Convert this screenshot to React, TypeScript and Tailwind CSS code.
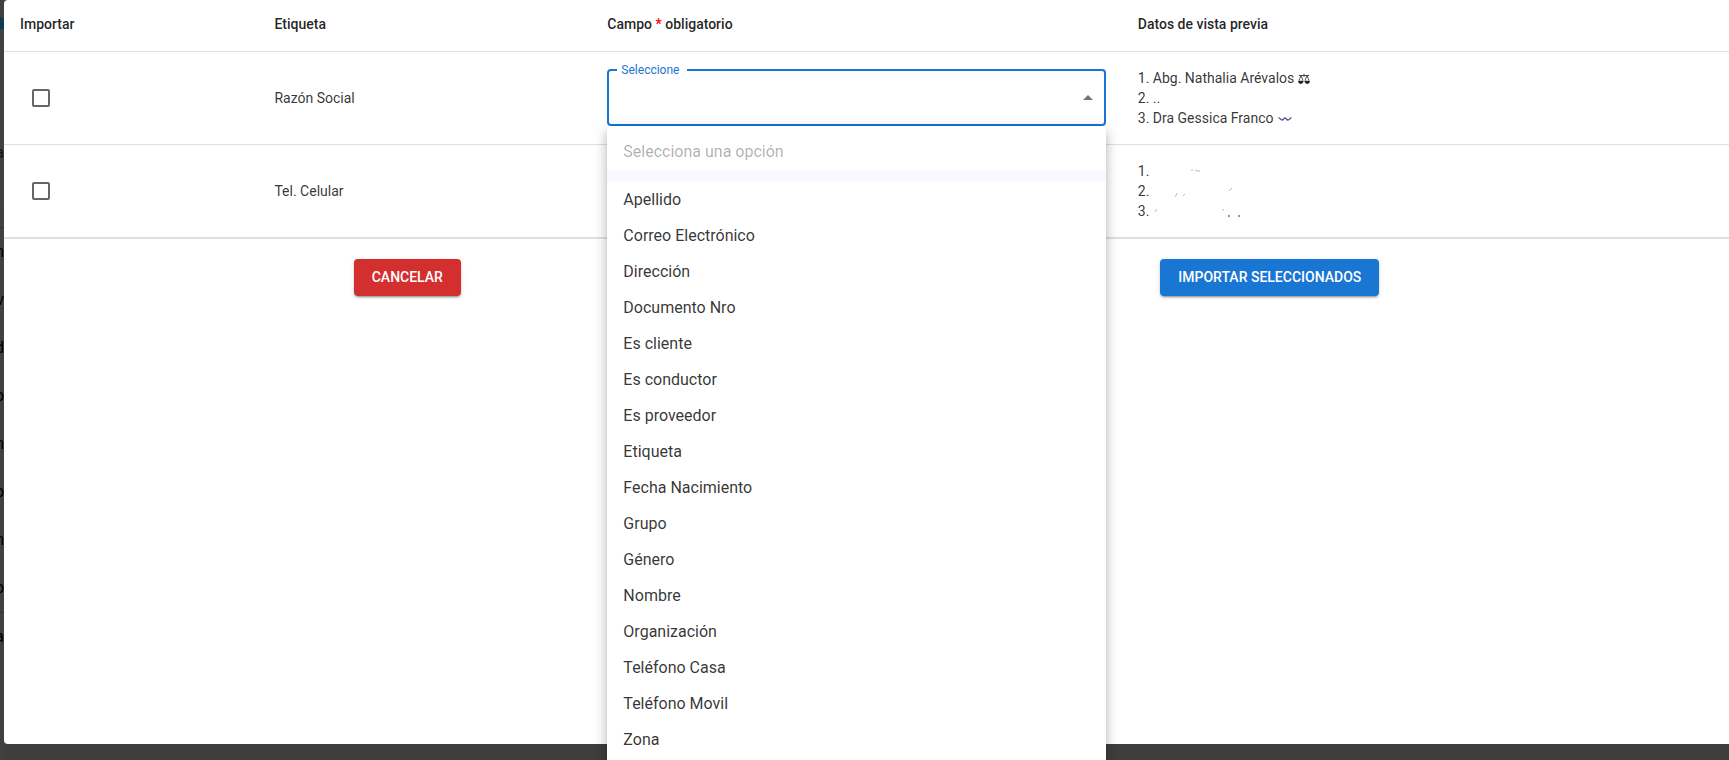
import { useState } from "react";

const options = [
  "Apellido", "Correo Electrónico", "Dirección", "Documento Nro", "Es cliente",
  "Es conductor", "Es proveedor", "Etiqueta", "Fecha Nacimiento", "Grupo",
  "Género", "Nombre", "Organización", "Teléfono Casa", "Teléfono Movil", "Zona",
];

const menuLetters = ["n", "v", "d", "o", "n", "o", "n", "o"];

function Scales() {
  return (
    <svg viewBox="0 0 12 12" className="ml-1 inline-block size-3" fill="none" stroke="#222" aria-label="balanza">
      <path d="M1 2.5h10M6 .8v2.9M3 2.5 1 7.5M3 2.5l2 5M9 2.5l-2 5M9 2.5l2 5" strokeWidth=".8" />
      <path d="M.4 8h4.8c0 3.500-4.8 3.500-4.8 0ZM6.8 8h4.8c0 3.500-4.8 3.500-4.8 0Z" fill="#222" strokeWidth=".5" />
    </svg>
  );
}

function Wave() {
  return (
    <svg viewBox="0 0 14 6" className="ml-1 inline-block h-1.5 w-3.5" fill="none" stroke="#5b4a96" aria-label="onda">
      <path d="M.5 1.8C2 1.5 2.5 4 4 4S6 1.8 7 1.8 8.5 4 10 4s2-2.3 3.5-2.2" strokeWidth="1.3" />
    </svg>
  );
}

function Smudges() {
  return (
    <svg viewBox="0 0 110 60" className="absolute top-3.5 left-7 h-15 w-[110px]" fill="none" stroke="#aaa" strokeWidth=".8" aria-hidden="true">
      <path d="M41 11h2M45 11.500l5 .6M27 34q-1 3-2 4M33 37l2-2M79 32l3-3M5 53l2-3M72 52l2-2" />
      <path d="M78 57h2M88 57h2" stroke="#333" strokeWidth="1" />
    </svg>
  );
}

function Check({ label }: { label: string }) {
  return (
    <input
      type="checkbox"
      aria-label={label}
      className="ml-3 block size-[18px] appearance-none rounded-xs border-2 border-[#666] checked:bg-[#1976d2]"
    />
  );
}

function FieldSelect() {
  const [open, setOpen] = useState(true);
  const [value, setValue] = useState("");
  return (
    <div className="relative">
      <fieldset className="-mt-2 h-16 rounded-sm border-2 border-[#1976d2] pr-1 pl-2">
        <legend className="h-4 px-1 text-xs leading-4 text-[#1976d2]">
          <label htmlFor="campo" className="mr-1">Seleccione</label>
        </legend>
        <button
          id="campo"
          type="button"
          aria-haspopup="listbox"
          aria-expanded={open}
          onClick={() => setOpen(!open)}
          className="flex h-10 w-full items-center justify-between pl-1 text-base outline-none"
        >
          <span>{value}</span>
          <svg viewBox="0 0 24 24" className="size-6 rotate-180" fill="#757575" aria-hidden="true">
            <path d="m7 10 5 5 5-5z" />
          </svg>
        </button>
      </fieldset>
      {open && (
        <ul
          role="listbox"
          aria-label="Campo"
          className="absolute top-full right-0 left-0 z-10 rounded-sm bg-white py-2 text-base shadow-[0_5px_5px_-3px_rgba(0,0,0,0.2),0_8px_10px_1px_rgba(0,0,0,0.14),0_3px_14px_2px_rgba(0,0,0,0.12)]"
        >
          <li role="option" aria-disabled="true" aria-selected="false" className="px-4 py-1.5 text-black/32">
            Selecciona una opción
          </li>
          <li role="option" aria-label="Vacío" aria-selected="true" className="h-3 bg-[#f6fafe]" />
          {options.map((o) => (
            <li
              key={o}
              role="option"
              aria-selected={value === o}
              onClick={() => { setValue(o); setOpen(false); }}
              className="cursor-pointer px-4 py-1.5 hover:bg-black/5"
            >
              {o}
            </li>
          ))}
        </ul>
      )}
    </div>
  );
}

const button =
  "rounded-sm px-[18px] pt-1.5 pb-[7px] text-sm leading-6 font-medium text-white uppercase shadow-[0_3px_1px_-2px_rgba(0,0,0,0.2),0_2px_2px_0_rgba(0,0,0,0.14),0_1px_5px_0_rgba(0,0,0,0.12)]";

export default function App() {
  return (
    <div className="flex h-screen overflow-hidden bg-[#3e3e3e] font-[Roboto,sans-serif] text-black/80">
      <div aria-hidden="true" className="flex w-1 shrink-0 flex-col overflow-hidden bg-[#43413f] pt-[17px] text-base text-black">
        <div className="h-3 shrink-0 rounded-tr-sm bg-[#0d3c55]" />
        <div className="mt-[112px] flex h-6 shrink-0 justify-end leading-6 text-[#1c1208]">ra</div>
        <div className="mt-[30px] h-3 w-px shrink-0 bg-[#2f4a5c]" />
        <div className="mt-5 h-px shrink-0 bg-[#353332]" />
        {menuLetters.map((l, i) => (
          <div key={i} className="flex h-12 shrink-0 items-center justify-end">{l}</div>
        ))}
        <div className="h-px shrink-0 bg-[#353332]" />
        <div className="flex h-12 shrink-0 items-center justify-end">a</div>
      </div>
      <main className="mb-4 min-w-0 flex-1 rounded-l-sm bg-white">
        <table className="w-full table-fixed border-collapse border-b-2 border-[#e0e0e0] text-left text-sm leading-5">
          <thead className="text-black/87">
            <tr className="border-b border-[#e0e0e0]">
              <th className="w-[14.75%] px-4 pt-3.5 pb-[17px] font-medium">Importar</th>
              <th className="w-[19.3%] px-4 pt-3.5 pb-[17px] font-medium">Etiqueta</th>
              <th className="w-[30.75%] px-4 pt-3.5 pb-[17px] font-medium">
                Campo <span className="text-[#ff0000]">*</span> obligatorio
              </th>
              <th className="px-4 pt-3.5 pb-[17px] font-medium">Datos de vista previa</th>
            </tr>
          </thead>
          <tbody>
            <tr className="border-b border-[#e0e0e0]">
              <td className="px-4"><Check label="Importar Razón Social" /></td>
              <td className="px-4">Razón Social</td>
              <td className="px-4"><FieldSelect /></td>
              <td className="px-4 py-4">
                <p>1. Abg. Nathalia Arévalos<Scales /></p>
                <p>2. ..</p>
                <p>3. Dra Gessica Franco<Wave /></p>
              </td>
            </tr>
            <tr>
              <td className="px-4"><Check label="Importar Tel. Celular" /></td>
              <td className="px-4">Tel. Celular</td>
              <td />
              <td className="relative px-4 py-4">
                <p>1.</p>
                <p>2.</p>
                <p>3.</p>
                <Smudges />
              </td>
            </tr>
          </tbody>
        </table>
        <div className="mt-5 flex justify-around">
          <button type="button" className={`${button} bg-[#d32f2f]`}>Cancelar</button>
          <button type="button" className={`${button} bg-[#1976d2]`}>Importar seleccionados</button>
        </div>
      </main>
    </div>
  );
}
